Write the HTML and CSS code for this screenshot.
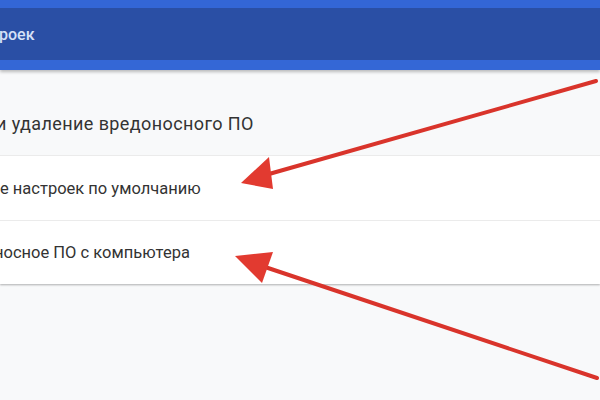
FILE: index.html
```html
<!DOCTYPE html>
<html>
<head>
<meta charset="utf-8">
<link rel="stylesheet" href="styles.css">
</head>
<body>
<div class="page">
  <header class="topbar">
    <div class="topband"></div>
    <div class="titlebar"><span class="title">роек</span></div>
    <div class="bottomband"></div>
  </header>
  <main class="content">
    <div class="card">
      <div class="row row-first"><span class="label label-first cut">и удаление вредоносного ПО</span></div>
      <div class="row"><span class="label">е настроек по умолчанию</span></div>
      <div class="row"><span class="label cut-n">носное ПО с компьютера</span></div>
    </div>
  </main>
  <svg class="arrows" width="600" height="400" viewBox="0 0 600 400">
    <line x1="596" y1="81" x2="262" y2="176" stroke="#d9342b" stroke-width="4" stroke-linecap="round"/>
    <polygon points="241,183 269,157 273,189" fill="#e23a30"/>
    <line x1="597" y1="378" x2="262" y2="266" stroke="#d9342b" stroke-width="4" stroke-linecap="round"/>
    <polygon points="235,256 273,252 262,283" fill="#e23a30"/>
  </svg>
</div>
</body>
</html>
```
FILE: styles.css
```css
html, body {
  margin: 0;
  padding: 0;
}
body {
  width: 600px;
  height: 400px;
  overflow: hidden;
  background: #f8f9fa;
  font-family: Roboto, "Liberation Sans", Arial, sans-serif;
}
.page {
  position: relative;
  width: 600px;
  height: 400px;
  display: flex;
  flex-direction: column;
}
.topbar {
  display: flex;
  flex-direction: column;
  box-shadow: 0 2px 3px rgba(0,0,0,0.25);
  position: relative;
  z-index: 1;
}
.topband {
  height: 8px;
  background: #3366d6;
}
.titlebar {
  height: 52px;
  background: #2a4fa5;
  display: flex;
  align-items: center;
}
.title {
  color: #d5e0f7;
  font-size: 16px;
  font-weight: 500;
  margin-left: -1px;
}
.bottomband {
  height: 10px;
  background: #3467d6;
}
.content {
  flex: 1;
  display: flex;
  flex-direction: column;
}
.card {
  display: flex;
  flex-direction: column;
  box-shadow: 0 1px 2px rgba(0,0,0,0.3);
}
.row {
  height: 65px;
  box-sizing: border-box;
  display: flex;
  align-items: center;
  background: #ffffff;
  border-bottom: 1px solid #ebebeb;
}
.row:last-child {
  border-bottom: none;
  height: 63px;
}
.row-first {
  height: 86px;
  background: #f8f9fa;
  padding-top: 21px;
}
.label {
  font-size: 16.5px;
  color: #333333;
  white-space: nowrap;
}
.label-first {
  font-size: 18px;
  letter-spacing: 0.4px;
}
.cut {
  margin-left: -4px;
}
.cut-n {
  margin-left: -6px;
}
.arrows {
  position: absolute;
  left: 0;
  top: 0;
  z-index: 2;
}
```
